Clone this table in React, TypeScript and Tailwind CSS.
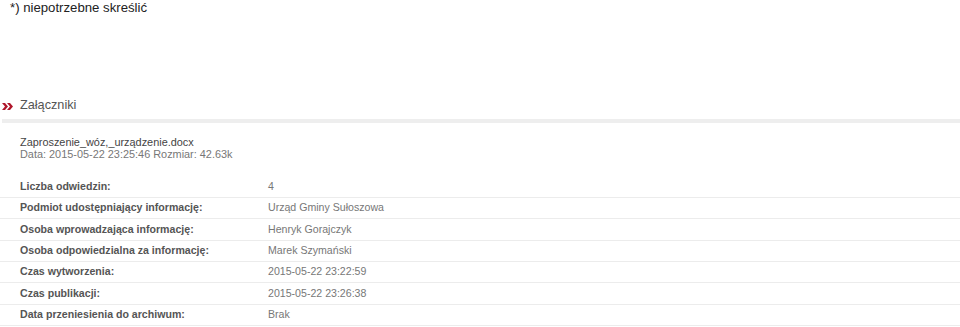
import React from 'react';

interface MetaRow {
  label: string;
  value: string;
}

const rows: MetaRow[] = [
  { label: 'Liczba odwiedzin:', value: '4' },
  { label: 'Podmiot udostępniający informację:', value: 'Urząd Gminy Sułoszowa' },
  { label: 'Osoba wprowadzająca informację:', value: 'Henryk Gorajczyk' },
  { label: 'Osoba odpowiedzialna za informację:', value: 'Marek Szymański' },
  { label: 'Czas wytworzenia:', value: '2015-05-22 23:22:59' },
  { label: 'Czas publikacji:', value: '2015-05-22 23:26:38' },
  { label: 'Data przeniesienia do archiwum:', value: 'Brak' },
];

const Chevrons: React.FC = () => (
  <svg className="w-[11px] h-[7px]" viewBox="0 0 11 7">
    <path d="M0 0h3l3 3.5-3 3.5H0l3-3.5z" fill="#b0162b" />
    <path d="M5 0h3l3 3.5-3 3.5H5l3-3.5z" fill="#b0162b" />
  </svg>
);

const App: React.FC = () => {
  return (
    <div className="w-[960px] h-[327px] bg-white overflow-hidden font-['Liberation_Sans',Arial,sans-serif]">
      <p className="pl-[10px] text-[13.2px] leading-[16px] text-[#222]">*) niepotrzebne skreślić</p>

      <div className="mt-[81px] flex items-center gap-[7px] pl-[2px] h-[18px]">
        <Chevrons />
        <h2 className="text-[12.7px] text-[#555]">Załączniki</h2>
      </div>
      <div className="mt-[4px] ml-[2px] h-[4px] bg-[#eeeeee]" />

      <div className="pl-[20px] pt-[13px] text-[10.9px] leading-[12px]">
        <a className="block text-[#444]">Zaproszenie_wóz,_urządzenie.docx</a>
        <span className="block text-[#777]">Data: 2015-05-22 23:25:46 Rozmiar: 42.63k</span>
      </div>

      <table className="mt-[16px] w-full text-[10.6px] border-collapse">
        <tbody>
          {rows.map((row) => (
            <tr key={row.label} className="h-[21.4px] border-b border-[#ececec]">
              <td className="pl-[20px] w-[268px] font-bold text-[#555]">{row.label}</td>
              <td className="text-[#777]">{row.value}</td>
            </tr>
          ))}
        </tbody>
      </table>
    </div>
  );
};

export default App;
